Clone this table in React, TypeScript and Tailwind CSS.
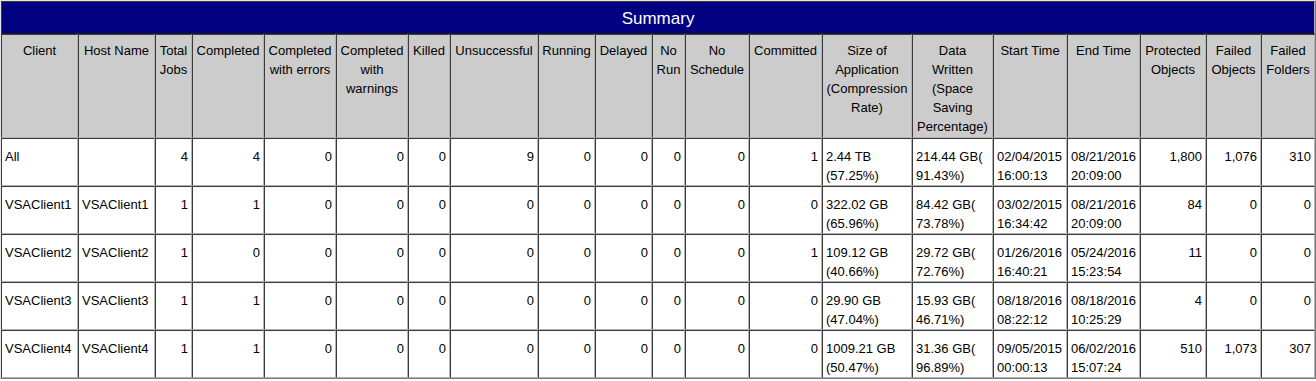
import React from "react";

const cols: { label: React.ReactNode; w: number }[] = [
  { label: "Client", w: 77 },
  { label: "Host Name", w: 77 },
  { label: "Total Jobs", w: 37 },
  { label: "Completed", w: 72 },
  { label: "Completed with errors", w: 72 },
  { label: "Completed with warnings", w: 72 },
  { label: "Killed", w: 42 },
  { label: "Unsuccessful", w: 88 },
  { label: "Running", w: 57 },
  { label: "Delayed", w: 57 },
  { label: "No Run", w: 33 },
  { label: "No Schedule", w: 64 },
  { label: "Committed", w: 73 },
  { label: "Size of Application (Compression Rate)", w: 90 },
  {
    label: (
      <>
        Data
        <br />
        Written
        <br />
        (Space
        <br />
        Saving
        <br />
        Percentage)
      </>
    ),
    w: 81,
  },
  { label: "Start Time", w: 74 },
  { label: "End Time", w: 73 },
  { label: "Protected Objects", w: 66 },
  { label: "Failed Objects", w: 55 },
  { label: "Failed Folders", w: 54 },
];

type Row = {
  client: string;
  host: string;
  nums: string[];
  size: [string, string];
  data: [string, string];
  start: [string, string];
  end: [string, string];
  tail: string[];
};

const rows: Row[] = [
  {
    client: "All",
    host: "",
    nums: ["4", "4", "0", "0", "0", "9", "0", "0", "0", "0", "1"],
    size: ["2.44 TB", "(57.25%)"],
    data: ["214.44 GB(", "91.43%)"],
    start: ["02/04/2015", "16:00:13"],
    end: ["08/21/2016", "20:09:00"],
    tail: ["1,800", "1,076", "310"],
  },
  {
    client: "VSAClient1",
    host: "VSAClient1",
    nums: ["1", "1", "0", "0", "0", "0", "0", "0", "0", "0", "0"],
    size: ["322.02 GB", "(65.96%)"],
    data: ["84.42 GB(", "73.78%)"],
    start: ["03/02/2015", "16:34:42"],
    end: ["08/21/2016", "20:09:00"],
    tail: ["84", "0", "0"],
  },
  {
    client: "VSAClient2",
    host: "VSAClient2",
    nums: ["1", "0", "0", "0", "0", "0", "0", "0", "0", "0", "1"],
    size: ["109.12 GB", "(40.66%)"],
    data: ["29.72 GB(", "72.76%)"],
    start: ["01/26/2016", "16:40:21"],
    end: ["05/24/2016", "15:23:54"],
    tail: ["11", "0", "0"],
  },
  {
    client: "VSAClient3",
    host: "VSAClient3",
    nums: ["1", "1", "0", "0", "0", "0", "0", "0", "0", "0", "0"],
    size: ["29.90 GB", "(47.04%)"],
    data: ["15.93 GB(", "46.71%)"],
    start: ["08/18/2016", "08:22:12"],
    end: ["08/18/2016", "10:25:29"],
    tail: ["4", "0", "0"],
  },
  {
    client: "VSAClient4",
    host: "VSAClient4",
    nums: ["1", "1", "0", "0", "0", "0", "0", "0", "0", "0", "0"],
    size: ["1009.21 GB", "(50.47%)"],
    data: ["31.36 GB(", "96.89%)"],
    start: ["09/05/2015", "00:00:13"],
    end: ["06/02/2016", "15:07:24"],
    tail: ["510", "1,073", "307"],
  },
];

const cell =
  "border border-t-[#3a3a3a] border-l-[#3a3a3a] border-r-[#b4b4b4] border-b-[#b4b4b4] px-[3px] pb-0 align-top";

function Two({ v }: { v: [string, string] }) {
  return (
    <>
      {v[0]}
      <br />
      {v[1]}
    </>
  );
}

export default function App() {
  return (
    <div className="bg-white w-[1316px] h-[381px]">
      <table
        className="table-fixed border-separate border-spacing-0 w-[1316px] border border-t-[#e6e6e6] border-l-[#e6e6e6] border-r-[#7a7a7a] border-b-[#7a7a7a] text-[13px] leading-[19px] text-black"
        style={{ fontFamily: '"Liberation Sans", Arial, sans-serif' }}
      >
        <colgroup>
          {cols.map((c, i) => (
            <col key={i} style={{ width: c.w }} />
          ))}
        </colgroup>
        <tbody>
          <tr className="h-[33px]">
            <td
              colSpan={20}
              className="border border-t-[#3a3a3a] border-l-[#3a3a3a] border-r-[#b4b4b4] border-b-[#1a1a1a] bg-[#000080] text-white text-center align-middle text-[17px] leading-[20px] pt-[2px]"
            >
              Summary
            </td>
          </tr>
          <tr className="h-[104px] bg-[#cccccc]">
            {cols.map((c, i) => (
              <td key={i} className={`${cell} text-center pt-[6px]`}>
                {c.label}
              </td>
            ))}
          </tr>
          {rows.map((r, ri) => (
            <tr key={ri} className="h-[48px] bg-white">
              <td className={`${cell} text-left pt-[8px]`}>{r.client}</td>
              <td className={`${cell} text-left pt-[8px]`}>{r.host}</td>
              {r.nums.map((n, ni) => (
                <td key={ni} className={`${cell} text-right pt-[8px]`}>
                  {n}
                </td>
              ))}
              <td className={`${cell} text-left pt-[8px]`}>
                <Two v={r.size} />
              </td>
              <td className={`${cell} text-left pt-[8px]`}>
                <Two v={r.data} />
              </td>
              <td className={`${cell} text-left pt-[8px]`}>
                <Two v={r.start} />
              </td>
              <td className={`${cell} text-left pt-[8px]`}>
                <Two v={r.end} />
              </td>
              {r.tail.map((n, ni) => (
                <td key={ni} className={`${cell} text-right pt-[8px]`}>
                  {n}
                </td>
              ))}
            </tr>
          ))}
        </tbody>
      </table>
    </div>
  );
}
